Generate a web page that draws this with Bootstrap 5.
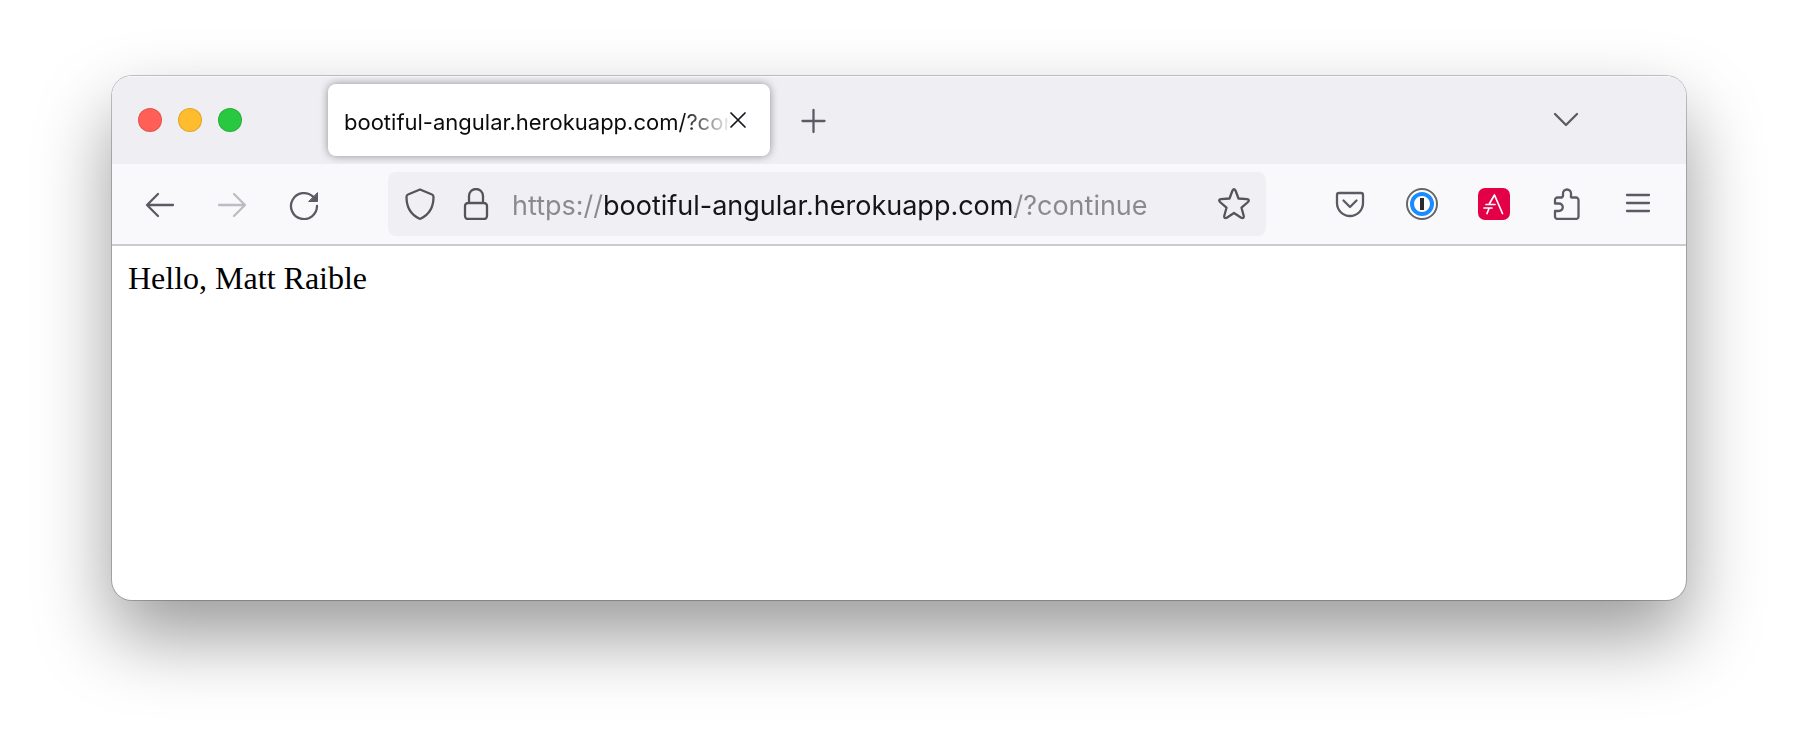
<!DOCTYPE html>
<html lang="en">
<head>
<meta charset="utf-8">
<meta name="viewport" content="width=device-width, initial-scale=1">
<title>bootiful-angular.herokuapp.com/?continue</title>
<link href="https://cdn.jsdelivr.net/npm/bootstrap@5.3.0/dist/css/bootstrap.min.css" rel="stylesheet">
<script src="https://cdn.jsdelivr.net/npm/bootstrap@5.3.0/dist/js/bootstrap.bundle.min.js" defer></script>
<style>
  body { background: #fff; padding: 76px 112px 148px; font-family: Inter, "Liberation Sans", sans-serif; }
  .browser { border-radius: 20px; background: #fff; box-shadow: 0 0 0 1px rgba(0,0,0,.22), 0 36px 76px rgba(0,0,0,.4); }
  .tab-strip { background: #efeef3; height: 88px; padding: 0 84px 0 26px; box-shadow: inset 0 2px 1px -1px #fafafc; }
  .lights { gap: 16px; margin-right: 86px; }
  .light { width: 24px; height: 24px; border-radius: 50%; border: 1px solid rgba(0,0,0,.12); padding: 0; }
  .light-close { background: #ff5f57; }
  .light-min { background: #febc2e; }
  .light-zoom { background: #28c840; }
  .page-tab { width: 442px; height: 72px; border-radius: 8px; background: #fff; padding: 0 16px; box-shadow: 0 0 8px rgba(0,0,0,.4); margin-right: 8px; }
  .tab-title { font-size: 22px; line-height: 32px; width: 384px; padding-top: 4px; color: #0c0c0d; white-space: nowrap; overflow: hidden;
    -webkit-mask-image: linear-gradient(90deg, #000 338px, transparent 388px); mask-image: linear-gradient(90deg, #000 338px, transparent 388px); }
  .tool { width: 72px; height: 64px; padding: 0; border: 0; background: none; color: #5b5b66; display: flex; align-items: center; justify-content: center; flex: none; }
  .tool:disabled { color: #bcbcc2; }
  .tool svg, .field-icon svg, .tab-close svg { display: block; fill: none; stroke: currentColor; stroke-width: 2; stroke-linecap: round; stroke-linejoin: round; }
  .tab-close { border: 0; background: none; padding: 0; width: 20px; color: #15141a; }
  .nav-strip { background: #f9f9fb; padding: 8px 12px; border-bottom: 2px solid #ccccd0; }
  .address { background: #f0eff4; border-radius: 8px; height: 64px; margin: 0 48px; padding: 0 16px; }
  .field-icon { width: 32px; height: 32px; border: 0; background: none; padding: 0; color: #545459; flex: none; }
  .address-input { border: 0; outline: 0; padding: 2px 0 0; margin: 0 16px 0 20px; min-width: 0; font-size: 27px; line-height: 40px; height: 42px; color: #15141a;
    background: linear-gradient(90deg, #8a898e 91px, #15141a 91px, #15141a 503px, #8a898e 503px);
    -webkit-background-clip: text; background-clip: text; -webkit-text-fill-color: transparent; }
  .viewport { padding: 16px; font-family: "Liberation Serif", serif; font-size: 32px; line-height: 32px; color: #000; }
</style>
</head>
<body class="min-vh-100 d-flex flex-column">
<div class="browser flex-grow-1 d-flex flex-column overflow-hidden">
  <header class="tab-strip d-flex align-items-center">
    <div class="lights d-flex">
      <button class="light light-close" aria-label="Close window"></button>
      <button class="light light-min" aria-label="Minimize window"></button>
      <button class="light light-zoom" aria-label="Zoom window"></button>
    </div>
    <div class="page-tab d-flex align-items-center">
      <div class="tab-title">bootiful-angular.herokuapp.com/?continue</div>
      <button class="tab-close" aria-label="Close tab"><svg width="20" height="20" viewBox="0 0 20 20"><path d="M3 3l14 14M17 3L3 17" stroke-width="1.700"/></svg></button>
    </div>
    <button class="tool" aria-label="New tab"><svg width="32" height="32" viewBox="0 0 32 32"><path d="M15.500 6v22M4.500 17h22" stroke-width="2.300"/></svg></button>
    <button class="tool ms-auto" aria-label="List all tabs"><svg width="32" height="32" viewBox="0 0 32 32"><path d="M5 10l11 11 11-11" stroke-width="2.3"/></svg></button>
  </header>
  <nav class="nav-strip d-flex align-items-center" aria-label="Browser toolbar">
    <button class="tool" aria-label="Back"><svg width="32" height="32" viewBox="0 0 32 32"><path d="M29 17H4M14 6L3 17l11 11" stroke-width="2.3"/></svg></button>
    <button class="tool" aria-label="Forward" disabled><svg width="32" height="32" viewBox="0 0 32 32"><path d="M3 17h25M18 6l11 11-11 11" stroke-width="2.3"/></svg></button>
    <button class="tool" aria-label="Reload"><svg width="32" height="32" viewBox="0 0 32 32"><path d="M29 18A13 13 0 1 1 25 8.700" stroke-width="2.300"/><path d="M29.500 5v8.500h-8.500z" fill="currentColor" stroke-width="1"/></svg></button>
    <div class="address flex-grow-1 d-flex align-items-center">
      <button class="field-icon" aria-label="Tracking protection"><svg width="32" height="32" viewBox="0 0 32 32"><path d="M16 1.500L28 6.500Q29.500 7 29.500 9C29.500 19 25 26.500 17 30.500Q16 31 15 30.500C7 26.500 2.500 19 2.500 9Q2.500 7 4 6.500Z" stroke-width="2.300"/></svg></button>
      <button class="field-icon ms-4" aria-label="Connection secure"><svg width="32" height="32" viewBox="0 0 32 32"><path d="M8 15h16a3 3 0 0 1 3 3v10a3 3 0 0 1-3 3H8a3 3 0 0 1-3-3V18a3 3 0 0 1 3-3zM9 15V8a7 7 0 0 1 14 0v7" stroke-width="2.300"/></svg></button>
      <input class="address-input flex-grow-1" type="text" aria-label="Address" value="https://bootiful-angular.herokuapp.com/?continue" spellcheck="false">
      <button class="field-icon" aria-label="Bookmark this page"><svg width="32" height="32" viewBox="0 0 32 32"><path d="M14.500 2.500Q16 0 17.500 2.500L20.500 10.500L29 11.200Q32 11.700 30 14L23.500 19.700L25.700 27.700Q26.200 31 23.200 29.700L16 25L8.800 29.700Q5.800 31 6.300 27.700L8.500 19.700L2 14Q0 11.700 3 11.200L11.500 10.500Z" stroke-width="2.300"/></svg></button>
    </div>
    <button class="tool" aria-label="Save to Pocket"><svg width="32" height="32" viewBox="0 0 32 32"><path d="M5 5h22a2 2 0 0 1 2 2v8a13 13 0 0 1-26 0V7a2 2 0 0 1 2-2zM9.500 12.500l6.500 6.500 6.500-6.500" stroke-width="2.300"/></svg></button>
    <button class="tool" aria-label="1Password"><svg width="32" height="32" viewBox="0 0 32 32"><circle cx="16" cy="16" r="15" fill="#fff" stroke="#66666b"/><circle cx="16" cy="16" r="10" stroke="#1a8cff" stroke-width="4"/><path d="M14 10h4v12h-4z" fill="#2b2b2b" stroke="none"/></svg></button>
    <button class="tool" aria-label="Asciidoctor preview"><svg width="32" height="32" viewBox="0 0 32 32"><rect width="32" height="32" rx="7" fill="#e40046" stroke="none"/><path d="M11.500 15.500L16.500 7L24.500 25.500M8 16.500h9M6 20h8M11 20.500L9 25.500" stroke="#fff" stroke-width="1.700"/></svg></button>
    <button class="tool" aria-label="Extensions"><svg width="32" height="32" viewBox="0 0 32 32"><path d="M5 15.500V12a2.500 2.500 0 0 1 2.500-2.500H12V9a1 1 0 0 0 1-1V5.500a4 4 0 0 1 8 0V8a1 1 0 0 0 1 1.500H26a2.500 2.500 0 0 1 2.500 2.500V28.500A2.500 2.500 0 0 1 26 31H7.500A2.500 2.500 0 0 1 5 28.500V23H9a3.750 3.750 0 0 0 0-7.500Z" stroke-width="2.300"/></svg></button>
    <button class="tool" aria-label="Application menu"><svg width="32" height="32" viewBox="0 0 32 32"><path d="M5 7h22M5 15h22M5 23h22" stroke-width="2.300"/></svg></button>
  </nav>
  <main class="viewport">Hello, Matt Raible</main>
</div>
</body>
</html>
